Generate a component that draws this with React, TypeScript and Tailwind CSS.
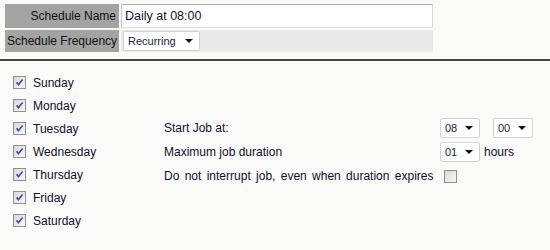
import React from "react";

const font = { fontFamily: '"Liberation Sans", Arial, sans-serif' };

function Check({ checked }: { checked: boolean }) {
  return (
    <svg width="13" height="13" viewBox="0 0 13 13" className="shrink-0">
      <defs>
        <linearGradient id={checked ? "gc" : "gu"} x1="0" y1="0" x2="1" y2="1">
          <stop offset="0" stopColor="#d6d6d3" />
          <stop offset="1" stopColor="#fbfbfb" />
        </linearGradient>
      </defs>
      <rect x="0.5" y="0.5" width="12" height="12" fill={`url(#${checked ? "gc" : "gu"})`} stroke="#8f9093" />
      {checked && (
        <path d="M3.5 6.2 L5.4 8.6 L9.6 3.4" fill="none" stroke="#3d53a8" strokeWidth="1.6" />
      )}
    </svg>
  );
}

function Select({ value, w }: { value: string; w: number }) {
  return (
    <div
      className="flex items-center justify-between bg-white border border-[#d2d2d2] rounded-[2px] h-[20px] pl-[4px] pr-[6px] text-[11px] text-[#1b1b3a]"
      style={{ width: w }}
    >
      <span>{value}</span>
      <svg width="8" height="4" viewBox="0 0 8 4">
        <path d="M0 0 L8 0 L4 4 Z" fill="#111" />
      </svg>
    </div>
  );
}

const days = ["Sunday", "Monday", "Tuesday", "Wednesday", "Thursday", "Friday", "Saturday"];

export default function App() {
  return (
    <div className="w-[550px] h-[250px] bg-[#fafaf8] overflow-hidden text-[12px] text-[#10102e]" style={font}>
      <div className="pt-[4px] pl-[5px] flex flex-col gap-[2px]">
        <div className="flex h-[24px]">
          <div className="w-[114px] bg-[#a3a3a3] flex items-center justify-end pr-[3px] text-[#111]">Schedule Name</div>
          <div className="ml-[2px] w-[312px] bg-white border border-[#c6c6c6] border-t-[#aaa] border-r-[#d8d8e0] border-b-[#dcdce4] flex items-center pl-[3px] text-[12.5px] text-[#10103a]">
            Daily at 08:00
          </div>
        </div>
        <div className="flex h-[22px]">
          <div className="w-[114px] bg-[#a3a3a3] flex items-center pl-[2px] text-[#111]">Schedule Frequency</div>
          <div className="ml-[2px] w-[312px] bg-[#e9e9e9] flex items-center pl-[2px]">
            <Select value="Recurring" w={77} />
          </div>
        </div>
      </div>
      <div className="mt-[7px] h-[2px] bg-[#444]" />
      <div className="flex pt-[10px]">
        <div className="pl-[13px] w-[164px] flex flex-col">
          {days.map((d) => (
            <div key={d} className="h-[23px] flex items-center gap-[7px]">
              <Check checked />
              <span>{d}</span>
            </div>
          ))}
        </div>
        <div className="mt-[45px] grid grid-cols-[276px_auto] auto-rows-[24px] items-center">
          <div>Start Job at:</div>
          <div className="flex gap-[13px]">
            <Select value="08" w={40} />
            <Select value="00" w={40} />
          </div>
          <div>Maximum job duration</div>
          <div className="flex items-center gap-[4px]">
            <Select value="01" w={40} />
            <span className="text-[12px]">hours</span>
          </div>
          <div className="whitespace-nowrap [word-spacing:2px]">Do not interrupt job, even when duration expires</div>
          <div className="pl-[4px] flex items-center">
            <Check checked={false} />
          </div>
        </div>
      </div>
    </div>
  );
}
